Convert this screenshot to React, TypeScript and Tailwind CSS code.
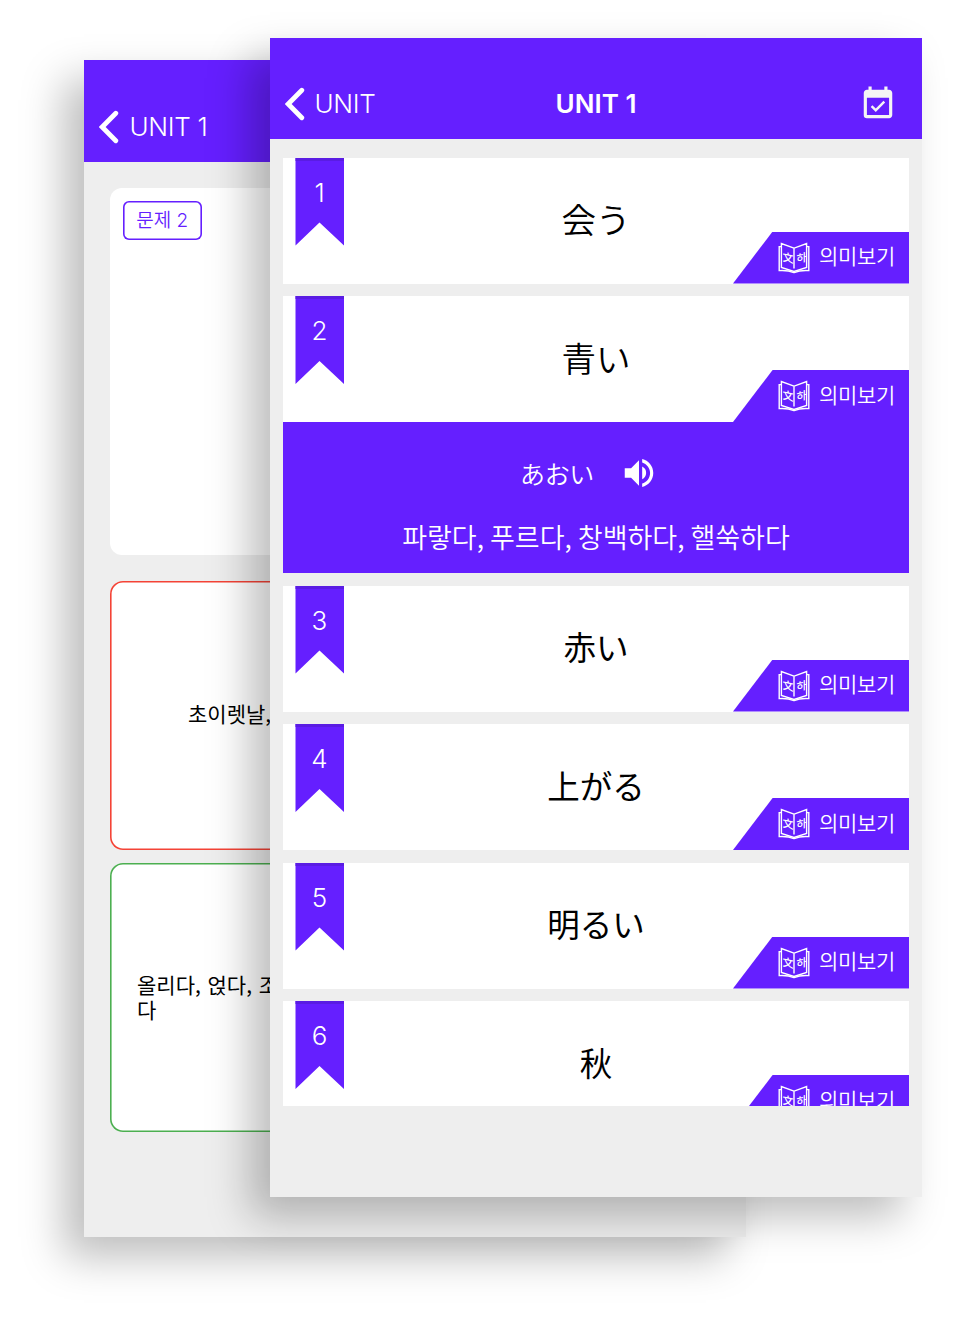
import { MdEventAvailable, MdVolumeUp } from "react-icons/md";

const KR = "font-['Noto_Sans_CJK_KR',sans-serif]";
const JP = "font-['Noto_Sans_CJK_JP',sans-serif]";

type Word = { id: number; word: string; size: string; reading?: string; meaning?: string };

const words: Word[] = [
  { id: 1, word: "会う", size: "text-[34.5px] font-[350]" },
  { id: 2, word: "青い", size: "text-[34.5px] font-[350]", reading: "あおい", meaning: "파랗다, 푸르다, 창백하다, 핼쑥하다" },
  { id: 3, word: "赤い", size: "text-[32.5px]" },
  { id: 4, word: "上がる", size: "text-[32.5px]" },
  { id: 5, word: "明るい", size: "text-[32.5px]" },
  { id: 6, word: "秋", size: "text-[32.5px]" },
];

function BackIcon() {
  return (
    <svg width="20" height="34" viewBox="0 0 20 34" fill="none" className="shrink-0">
      <path d="M16.8 3.2 3.2 17 16.8 30.8" stroke="white" strokeWidth="4.8" strokeLinecap="round" />
    </svg>
  );
}

function BookIcon() {
  return (
    <svg width="32" height="32" viewBox="0 0 32 32" fill="none" stroke="white" strokeWidth="1.4" className="shrink-0">
      <path d="M16 6.2 3.4 1.5V25.5L16 29.5L28.6 25.5V1.5L16 6.2V26.5" />
      <path d="M3.4 4.6H1.2V28.6C7 28.2 12 29 16 30.6C20 29 25 28.2 30.8 28.6V4.6H28.6" />
      <g fill="white" stroke="none" fontSize="11" fontWeight="500">
        <text transform="translate(4.4 18.8) skewY(12)" className={JP}>文</text>
        <text transform="translate(18.4 21) skewY(-12)" className={KR}>하</text>
      </g>
    </svg>
  );
}

function WordCard({ item }: { item: Word }) {
  return (
    <div className="shrink-0">
      <div className="relative flex h-[126px] items-center justify-center bg-white">
        <div className="absolute left-[12px] top-0 flex h-[88px] w-[49px] justify-center border-t-[3px] border-[#5a1ce3] bg-[#651fff] pt-[13px] text-[26px] font-[350] leading-[38px] text-white [clip-path:polygon(0.5px_0,100%_0,100%_100%,50%_74%,0.5px_100%)]">
          {item.id}
        </div>
        <span className={`${JP} ${item.size} pb-[5px] leading-[50px] text-black`}>{item.word}</span>
        <div className="absolute bottom-0 right-0 flex h-[52px] w-[176px] items-center bg-[#651fff] pl-[45px] text-white [clip-path:polygon(22.5%_0,100%_0,100%_100%,0_100%)]">
          <BookIcon />
          <span className={`${KR} ml-[9px] pb-[5px] text-[21px] font-[350] leading-[30px] tracking-[-0.3px] whitespace-nowrap`}>의미보기</span>
        </div>
      </div>
      {item.reading && (
        <div className="flex h-[151px] flex-col items-center bg-[#651fff] pt-[31px] text-white">
          <div className="flex h-[40px] items-center gap-[26px] pr-[14px]">
            <span className={`${JP} pb-[1px] text-[25px] font-[350] leading-[36px] tracking-[-0.3px]`}>{item.reading}</span>
            <MdVolumeUp size={38} />
          </div>
          <div className={`${KR} mt-[24px] text-[27px] font-[350] leading-[40px] whitespace-nowrap`}>{item.meaning}</div>
        </div>
      )}
    </div>
  );
}

function QuizScreen() {
  return (
    <section className="absolute left-[84px] top-[60px] flex h-[1177px] w-[662px] flex-col bg-[#eeeeee] shadow-[-20px_20px_40px_rgba(0,0,0,0.26)]">
      <header className="flex h-[102px] shrink-0 items-start gap-[10.5px] bg-[#651fff] pl-[15px] pt-[50px] text-[26px] font-[350] leading-[34px] tracking-[-0.3px] text-white">
        <BackIcon />
        <span>UNIT 1</span>
      </header>
      <div className="flex flex-col px-[26px] pt-[26px]">
        <div className="h-[367px] rounded-[12px] bg-white pl-[12.5px] pt-[13px]">
          <div className="flex h-[39px] w-[79.5px] items-center justify-center rounded-[6px] pt-[2px] font-['Inter','Noto_Sans_CJK_KR',sans-serif] text-[19px] font-[350] text-[#651fff] shadow-[inset_0_0_0_1.6px_#651fff]">
            문제 2
          </div>
        </div>
        <div className={`${KR} mt-[26px] flex h-[269px] items-center rounded-[13px] bg-white pb-[4px] pl-[78px] text-[21px] leading-[25px] text-black shadow-[inset_0_0_0_1.6px_#f44336]`}>
          초이렛날,
        </div>
        <div className={`${KR} mt-[13px] flex h-[269px] items-center rounded-[13px] bg-white pb-[2px] pl-[27px] text-[21px] leading-[25px] text-black [word-spacing:2px] shadow-[inset_0_0_0_1.6px_#4caf50]`}>
          <p>올리다, 얹다, 조<br />다</p>
        </div>
      </div>
    </section>
  );
}

function UnitScreen() {
  return (
    <section className="absolute left-[270px] top-[38px] flex h-[1159px] w-[652px] flex-col bg-[#eeeeee] shadow-[-20px_20px_40px_rgba(0,0,0,0.26)]">
      <header className="grid h-[101px] shrink-0 grid-cols-3 items-start bg-[#651fff] pl-[15px] pr-[25px] pt-[49px] text-[26px] leading-[34px] text-white">
        <div className="flex gap-[9.5px] font-[350] tracking-[-0.3px]">
          <BackIcon />
          <span>UNIT</span>
        </div>
        <h1 className="pl-[10px] text-center font-semibold">UNIT 1</h1>
        <MdEventAvailable size={38} className="-mt-[2px] justify-self-end text-[#f5f5f5]" />
      </header>
      <div className="mt-[18.5px] flex h-[948px] flex-col gap-[12.5px] overflow-hidden px-[13px]">
        {words.map((w) => (
          <WordCard key={w.id} item={w} />
        ))}
      </div>
    </section>
  );
}

export default function App() {
  return (
    <main className="relative h-[1322px] w-[962px] overflow-hidden bg-white font-['Inter',sans-serif]">
      <QuizScreen />
      <UnitScreen />
    </main>
  );
}
